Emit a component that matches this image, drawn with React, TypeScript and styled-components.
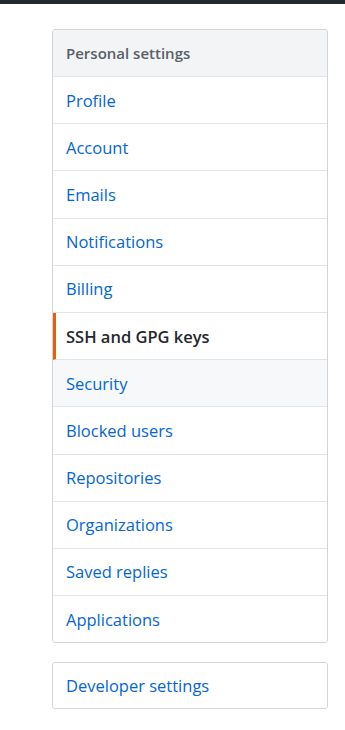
import React from "react";
import styled, { createGlobalStyle } from "styled-components";

const Global = createGlobalStyle`
  html, body { margin: 0; padding: 0; background: #fff; }
  body { font-family: "Open Sans", "Noto Sans", "Liberation Sans", sans-serif; }
`;

const TopBar = styled.div`
  height: 4px;
  background: #24292e;
`;

const Sidebar = styled.nav`
  width: 276px;
  margin: 25px 0 0 52px;
  display: flex;
  flex-direction: column;
  gap: 18.5px;
`;

const Menu = styled.div`
  border: 1px solid #d1d5da;
  border-radius: 3px;
  overflow: hidden;
  display: flex;
  flex-direction: column;
`;

const Heading = styled.div`
  height: 46px;
  display: flex;
  align-items: center;
  padding-left: 13px;
  background: #f3f4f6;
  border-bottom: 1px solid #e1e4e8;
  color: #586069;
  font-size: 15px;
  font-weight: 600;
`;

const Item = styled.a<{ $selected?: boolean; $hover?: boolean; $last?: boolean; $h?: number }>`
  height: ${(p) => p.$h ?? 46.2}px;
  display: flex;
  align-items: center;
  padding-left: ${(p) => (p.$selected ? "10px" : "13px")};
  border-left: ${(p) => (p.$selected ? "3px solid #e36209" : "none")};
  border-bottom: ${(p) => (p.$last ? "none" : "1px solid #e1e4e8")};
  background: ${(p) => (p.$hover ? "#f6f8fa" : "#fff")};
  color: ${(p) => (p.$selected ? "#24292e" : "#0366d6")};
  font-size: 16.5px;
  font-weight: ${(p) => (p.$selected ? 600 : 400)};
  text-decoration: none;
  cursor: pointer;
`;

const items = [
  "Profile",
  "Account",
  "Emails",
  "Notifications",
  "Billing",
  "SSH and GPG keys",
  "Security",
  "Blocked users",
  "Repositories",
  "Organizations",
  "Saved replies",
  "Applications",
];

export default function App() {
  return (
    <>
      <Global />
      <TopBar />
      <Sidebar>
        <Menu>
          <Heading>Personal settings</Heading>
          {items.map((t, i) => (
            <Item
              key={t}
              $selected={t === "SSH and GPG keys"}
              $hover={t === "Security"}
              $last={i === items.length - 1}
            >
              {t}
            </Item>
          ))}
        </Menu>
        <Menu>
          <Item $last $h={45.5}>Developer settings</Item>
        </Menu>
      </Sidebar>
    </>
  );
}
